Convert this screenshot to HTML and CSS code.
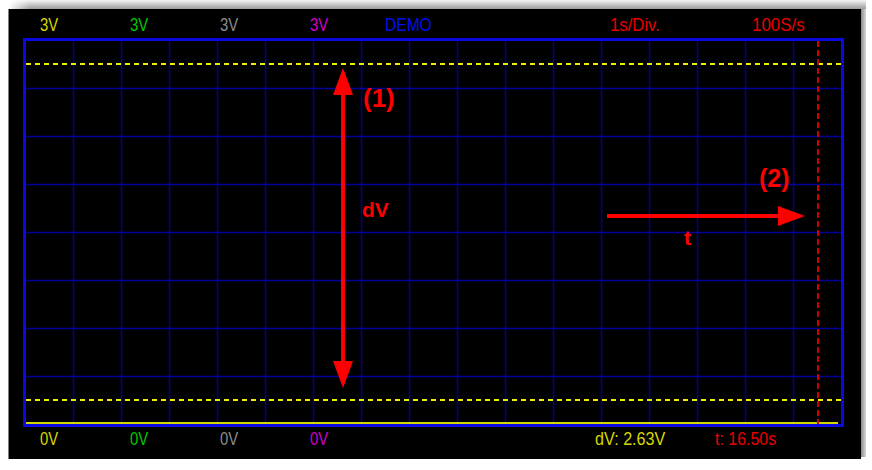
FILE: index.html
```html
<!DOCTYPE html>
<html>
<head>
<meta charset="utf-8">
<link rel="stylesheet" href="styles.css">
</head>
<body>
<div class="frame">
  <div class="shadow-top"></div>
  <div class="frame-row">
    <div class="screen">
      <div class="labels labels-top">
        <span class="cell w90 s78 c-yellow">3V</span>
        <span class="cell w90 s78 c-green">3V</span>
        <span class="cell w90 s78 c-grey">3V</span>
        <span class="cell w75 s78 c-magenta">3V</span>
        <span class="cell w225 s82 c-blue">DEMO</span>
        <span class="cell w142 s88 c-red">1s/Div.</span>
        <span class="cell s89 c-red">100S/s</span>
      </div>
      <div class="plot"></div>
      <div class="labels labels-bottom">
        <span class="cell w90 s78 c-yellow">0V</span>
        <span class="cell w90 s78 c-green">0V</span>
        <span class="cell w90 s78 c-grey">0V</span>
        <span class="cell w285 s78 c-magenta">0V</span>
        <span class="cell w120 s85 c-yellow">dV: 2.63V</span>
        <span class="cell s84 c-red">t: 16.50s</span>
      </div>
      <svg class="overlay" width="852" height="450" viewBox="9 9 852 450">
        <g class="grid" stroke="#000098" stroke-width="1.5">
          <path d="M73.5 41V424M121.5 41V424M169.5 41V424M217.5 41V424M265.5 41V424M313.5 41V424M361.5 41V424M409.5 41V424M457.5 41V424M505.5 41V424M553.5 41V424M601.5 41V424M649.5 41V424M697.5 41V424M745.5 41V424M793.5 41V424"/>
          <path d="M26 88.5H841M26 136.5H841M26 184.5H841M26 232.5H841M26 280.5H841M26 328.5H841M26 376.5H841"/>
        </g>
        <line x1="26" y1="64" x2="841" y2="64" stroke="#f0f000" stroke-width="2" stroke-dasharray="5 4"/>
        <line x1="26" y1="400" x2="841" y2="400" stroke="#f0f000" stroke-width="2" stroke-dasharray="5 4"/>
        <line x1="26" y1="423" x2="838" y2="423" stroke="#d4d400" stroke-width="2"/>
        <line x1="818" y1="41" x2="818" y2="424" stroke="#cc0000" stroke-width="2" stroke-dasharray="6 3"/>
        <rect x="341" y="94" width="4" height="268" fill="#ff0000"/>
        <polygon points="343,68 353,95 333,95" fill="#ff0000"/>
        <polygon points="333,361 353,361 343,388" fill="#ff0000"/>
        <rect x="607" y="214" width="172" height="4" fill="#ff0000"/>
        <polygon points="778,206 805,216 778,226" fill="#ff0000"/>
        <text class="note big" x="363" y="107">(1)</text>
        <text class="note mid" x="362" y="217">dV</text>
        <text class="note big2" x="759" y="187">(2)</text>
        <text class="note mid" x="684" y="245">t</text>
      </svg>
    </div>
    <div class="shadow-right"></div>
  </div>
</div>
</body>
</html>
```
FILE: styles.css
```css
html, body {
  margin: 0;
  padding: 0;
  background: #ffffff;
}

.frame {
  margin-left: 8px;
  width: 858px;
}

.shadow-top {
  height: 9px;
  background-image:
    linear-gradient(to right, #ffffff, rgba(255,255,255,0) 22px),
    linear-gradient(to bottom, #f6f6f6, #9c9c9c);
}

.frame-row {
  display: flex;
  align-items: flex-start;
}

.screen {
  position: relative;
  width: 852px;
  height: 450px;
  background: #000000;
  border-left: 1px solid #808080;
  display: flex;
  flex-direction: column;
}

.shadow-right {
  width: 5px;
  height: 448px;
  background: linear-gradient(to right, #8c8c8c, #d8d8d8);
}

.labels {
  display: flex;
  font-family: "Liberation Sans", Arial, sans-serif;
  font-size: 19px;
  line-height: 20px;
  white-space: nowrap;
  padding-left: 31px;
}

.labels-top {
  height: 29px;
  box-sizing: border-box;
  padding-top: 6px;
}

.labels-bottom {
  height: 32px;
  box-sizing: border-box;
  padding-top: 2px;
}

.cell {
  display: block;
  flex: none;
  transform-origin: 0 0;
}
.s78 { transform: scaleX(0.78); }
.s82 { transform: scaleX(0.82); }
.s84 { transform: scaleX(0.84); }
.s85 { transform: scaleX(0.85); }
.s88 { transform: scaleX(0.88); }
.s89 { transform: scaleX(0.89); }

.w75 { width: 75px; }
.w90 { width: 90px; }
.w120 { width: 120px; }
.w142 { width: 142px; }
.w225 { width: 225px; }
.w285 { width: 285px; }

.c-yellow { color: #d8d800; }
.c-green { color: #00c800; }
.c-grey { color: #8c8c8c; }
.c-magenta { color: #d000d0; }
.c-blue { color: #0010e8; }
.c-red { color: #e80000; }

.plot {
  flex: none;
  margin-left: 14px;
  width: 815px;
  height: 383px;
  border: 3px solid #0a0ae0;
  background: #000000;
}

.overlay {
  position: absolute;
  left: 0;
  top: 0;
}

.note {
  font-family: "Liberation Sans", Arial, sans-serif;
  font-weight: bold;
  fill: #ff0000;
}
.big { font-size: 26px; }
.big2 { font-size: 25px; }
.mid { font-size: 21px; }
```
